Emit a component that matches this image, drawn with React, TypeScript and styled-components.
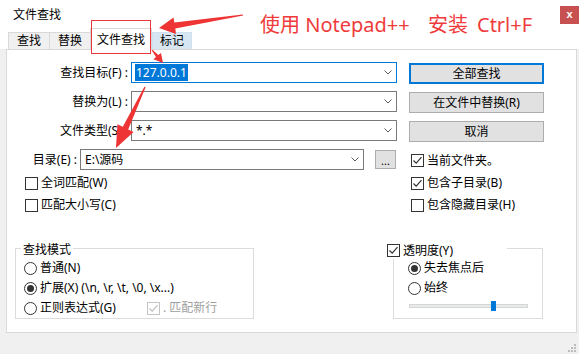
import React from "react";
import styled, { createGlobalStyle } from "styled-components";

const GlobalStyle = createGlobalStyle`
  html, body { margin: 0; padding: 0; background: #ffffff; }
  body {
    font-family: "Noto Sans", "Noto Sans CJK SC", sans-serif;
    font-size: 12px;
    line-height: 16px;
    color: #000;
  }
  *, *::before, *::after { box-sizing: border-box; }
`;

const Window = styled.div`
  position: relative;
  width: 579px;
  height: 354px;
  background: #f0f0f0;
  display: flex;
  flex-direction: column;
`;

const TitleBar = styled.div`
  height: 28px;
  flex: none;
  background: #fff;
  display: flex;
  align-items: center;
  justify-content: space-between;
  padding: 2px 0 0 13px;
`;

const Title = styled.span`
  color: #000;
`;

const CloseButton = styled.div`
  width: 19px;
  height: 18px;
  background: #c75050;
  color: #fff;
  display: flex;
  align-items: center;
  justify-content: center;
  font-family: "Liberation Sans", sans-serif;
  font-weight: bold;
  font-size: 11px;
  line-height: 1;
  padding-bottom: 2px;
`;

const TabStrip = styled.div`
  height: 21px;
  flex: none;
  background: #fff;
  display: flex;
  align-items: flex-end;
  padding-left: 8px;
  position: relative;
  z-index: 1;
`;

type TabVariant = "normal" | "active" | "hot";

const Tab = styled.div<{ $variant: TabVariant; $w: number; $ml: number }>`
  width: ${(p) => p.$w}px;
  margin-left: ${(p) => p.$ml}px;
  height: ${(p) => (p.$variant === "active" ? 22 : 17)}px;
  margin-bottom: ${(p) => (p.$variant === "active" ? -1 : 0)}px;
  display: flex;
  align-items: center;
  justify-content: center;
  white-space: nowrap;
  border: 1px solid
    ${(p) => (p.$variant === "hot" ? "#cfe0f1" : "#d9d9d9")};
  border-bottom: none;
  background: ${(p) =>
    p.$variant === "active" ? "#ffffff" : p.$variant === "hot" ? "#d8e6f2" : "#f0f0f0"};
`;

const Client = styled.div`
  flex: none;
  height: 284px;
  display: flex;
  padding: 0 2px 0 6px;
`;

const Panel = styled.div`
  flex: 1;
  background: #fff;
  border: 1px solid #d9d9d9;
  padding-top: 12px;
  display: flex;
  flex-direction: column;
  gap: 32px;
`;

const TopGrid = styled.div`
  display: grid;
  grid-template-columns: 390px 135px;
  column-gap: 12px;
  grid-template-rows: 29px 29px 29px 23px 22px 22px;
`;

const FieldRow = styled.div<{ $indent?: number }>`
  display: flex;
  align-items: center;
  align-self: start;
  padding-left: ${(p) => p.$indent ?? 0}px;
`;

const FieldLabel = styled.span<{ $w: number }>`
  width: ${(p) => p.$w}px;
  text-align: right;
  white-space: nowrap;
  margin-right: 3px;
`;

const Combo = styled.div<{ $w: number; $focus?: boolean }>`
  width: ${(p) => p.$w}px;
  height: 21px;
  border: 1px solid ${(p) => (p.$focus ? "#0078d7" : "#7a7a7a")};
  background: #fff;
  display: flex;
  align-items: center;
  justify-content: space-between;
  padding: 0 4px 0 3px;
`;

const ComboText = styled.span`
  padding-left: 1px;
  white-space: nowrap;
`;

const Selected = styled.span`
  background: #0078d7;
  color: #fff;
  padding: 0 1px;
  margin-left: -1px;
`;

const Button = styled.div<{ $default?: boolean }>`
  height: 21px;
  margin-top: 1px;
  align-self: start;
  border: ${(p) => (p.$default ? "2px solid #0078d7" : "1px solid #adadad")};
  background: #e1e1e1;
  display: flex;
  align-items: center;
  justify-content: center;
  white-space: nowrap;
`;

const SmallButton = styled.div`
  width: 21px;
  height: 19px;
  margin-left: 11px;
  border: 1px solid #adadad;
  background: #e1e1e1;
  display: flex;
  align-items: flex-end;
  justify-content: center;
  font-size: 11px;
  line-height: 14px;
`;

const CheckRow = styled.div<{ $indent?: number; $disabled?: boolean }>`
  display: flex;
  align-items: center;
  align-self: center;
  gap: 3px;
  padding-left: ${(p) => p.$indent ?? 0}px;
  color: ${(p) => (p.$disabled ? "#a0a0a0" : "#000")};
  white-space: nowrap;
`;

const Box = styled.span<{ $disabled?: boolean }>`
  width: 13px;
  height: 13px;
  flex: none;
  border: 1px solid ${(p) => (p.$disabled ? "#c4c4c4" : "#333")};
  background: #fff;
  display: flex;
  align-items: center;
  justify-content: center;
`;

const Circle = styled.span`
  width: 13px;
  height: 13px;
  flex: none;
  border: 1px solid #333;
  border-radius: 50%;
  background: #fff;
  display: flex;
  align-items: center;
  justify-content: center;
`;

const Dot = styled.span`
  width: 7px;
  height: 7px;
  border-radius: 50%;
  background: #333;
`;

const RadioRow = styled.div<{ $w?: number }>`
  display: flex;
  align-items: center;
  gap: 3px;
  height: 20px;
  white-space: nowrap;
  width: ${(p) => (p.$w ? `${p.$w}px` : "auto")};
  flex: none;
`;

const Line = styled.div`
  display: flex;
  align-items: center;
  height: 20px;
`;

const Lower = styled.div`
  display: flex;
  padding-left: 8px;
  gap: 139px;
`;

const GroupBox = styled.div<{ $w: number; $pl: number }>`
  position: relative;
  width: ${(p) => p.$w}px;
  height: 71px;
  border: 1px solid #dcdcdc;
  padding: 9px 0 0 ${(p) => p.$pl}px;
  display: flex;
  flex-direction: column;
`;

const Legend = styled.span`
  position: absolute;
  top: -7px;
  left: 5px;
  padding: 0 2px;
  background: #fff;
  line-height: 16px;
`;

const CheckLegend = styled.div`
  position: absolute;
  top: -7px;
  left: -7px;
  width: 120px;
  height: 17px;
  background: #fff;
  display: flex;
  align-items: center;
  gap: 3px;
`;

const SliderRow = styled.div`
  height: 15px;
  display: flex;
  align-items: center;
`;

const Track = styled.div`
  position: relative;
  width: 119px;
  height: 4px;
  margin-left: 1px;
  background: #e7eaea;
  border: 1px solid #d6d6d6;
`;

const Thumb = styled.div`
  position: absolute;
  top: -4px;
  width: 5px;
  height: 10px;
  background: #0078d7;
`;

const StatusBar = styled.div`
  flex: 1;
  display: flex;
  justify-content: flex-end;
  align-items: flex-end;
  padding: 0 3px 2px 0;
`;

const Overlay = styled.div`
  position: absolute;
  inset: 0;
  pointer-events: none;
  z-index: 5;
`;

const AnnoSpan = styled.span<{ $x: number }>`
  position: absolute;
  left: ${(p) => p.$x}px;
  top: 13px;
  font-family: "Noto Sans", "Noto Sans CJK SC", sans-serif;
  font-size: 20px;
  line-height: 24px;
  color: #ef3b3b;
  white-space: pre;
`;

const RedBox = styled.div`
  position: absolute;
  left: 91px;
  top: 20px;
  width: 60px;
  height: 34px;
  border: 1px solid #e8383d;
`;

const ArrowLayer = styled.svg`
  position: absolute;
  left: 0;
  top: 0;
`;

const Chevron = () => (
  <svg width="8" height="5" viewBox="0 0 8 5">
    <polyline points="0.5,0.5 4,4 7.5,0.5" fill="none" stroke="#5a5a5a" strokeWidth="1" />
  </svg>
);

const Tick = ({ color }: { color: string }) => (
  <svg width="11" height="11" viewBox="0 0 11 11">
    <polyline points="1.5,5.5 4.2,8.2 9.5,2.2" fill="none" stroke={color} strokeWidth="1.2" />
  </svg>
);

function Check({
  checked,
  disabled,
  indent,
  children,
}: {
  checked?: boolean;
  disabled?: boolean;
  indent?: number;
  children: React.ReactNode;
}) {
  return (
    <CheckRow $indent={indent} $disabled={disabled}>
      <Box $disabled={disabled}>{checked && <Tick color={disabled ? "#bdbdbd" : "#333"} />}</Box>
      <span>{children}</span>
    </CheckRow>
  );
}

function Radio({ selected, w, children }: { selected?: boolean; w?: number; children: React.ReactNode }) {
  return (
    <RadioRow $w={w}>
      <Circle>{selected && <Dot />}</Circle>
      <span>{children}</span>
    </RadioRow>
  );
}

const Grip = () => (
  <svg width="8" height="8" viewBox="0 0 8 8">
    {[
      [6, 0],
      [3, 3],
      [6, 3],
      [0, 6],
      [3, 6],
      [6, 6],
    ].map(([x, y]) => (
      <rect key={`${x}-${y}`} x={x} y={y} width="2" height="2" fill="#bcbcbc" />
    ))}
  </svg>
);

const opacityValue = 72;

export default function App() {
  const thumbLeft = Math.round((opacityValue / 100) * (117 - 5));
  return (
    <>
      <GlobalStyle />
      <Window>
        <TitleBar>
          <Title>文件查找</Title>
          <CloseButton>x</CloseButton>
        </TitleBar>
        <TabStrip>
          <Tab $variant="normal" $w={42} $ml={0}>查找</Tab>
          <Tab $variant="normal" $w={42} $ml={-1}>替换</Tab>
          <Tab $variant="active" $w={62} $ml={-1}>文件查找</Tab>
          <Tab $variant="hot" $w={40} $ml={0}>标记</Tab>
        </TabStrip>
        <Client>
          <Panel>
            <TopGrid>
              <FieldRow>
                <FieldLabel $w={121}>查找目标(F) :</FieldLabel>
                <Combo $w={266} $focus>
                  <ComboText>
                    <Selected>127.0.0.1</Selected>
                  </ComboText>
                  <Chevron />
                </Combo>
              </FieldRow>
              <Button $default>全部查找</Button>

              <FieldRow>
                <FieldLabel $w={121}>替换为(L) :</FieldLabel>
                <Combo $w={266}>
                  <ComboText />
                  <Chevron />
                </Combo>
              </FieldRow>
              <Button>在文件中替换(R)</Button>

              <FieldRow>
                <FieldLabel $w={121}>文件类型(S) :</FieldLabel>
                <Combo $w={266}>
                  <ComboText>*.*</ComboText>
                  <Chevron />
                </Combo>
              </FieldRow>
              <Button>取消</Button>

              <FieldRow $indent={25}>
                <FieldLabel $w={45}>目录(E) :</FieldLabel>
                <Combo $w={284}>
                  <ComboText>{"E:\\源码"}</ComboText>
                  <Chevron />
                </Combo>
                <SmallButton>...</SmallButton>
              </FieldRow>
              <Check checked indent={2}>当前文件夹。</Check>

              <Check indent={18}>全词匹配(W)</Check>
              <Check checked indent={2}>包含子目录(B)</Check>

              <Check indent={18}>匹配大小写(C)</Check>
              <Check indent={2}>包含隐藏目录(H)</Check>
            </TopGrid>

            <Lower>
              <GroupBox $w={239} $pl={8}>
                <Legend>查找模式</Legend>
                <Radio>普通(N)</Radio>
                <Radio selected>{"扩展(X) (\\n, \\r, \\t, \\0, \\x...)"}</Radio>
                <Line>
                  <Radio w={123}>正则表达式(G)</Radio>
                  <Check checked disabled>
                    . 匹配新行
                  </Check>
                </Line>
              </GroupBox>

              <GroupBox $w={150} $pl={14}>
                <CheckLegend>
                  <Box>
                    <Tick color="#333" />
                  </Box>
                  <span>透明度(Y)</span>
                </CheckLegend>
                <Radio selected>失去焦点后</Radio>
                <Radio>始终</Radio>
                <SliderRow>
                  <Track>
                    <Thumb style={{ left: thumbLeft }} />
                  </Track>
                </SliderRow>
              </GroupBox>
            </Lower>
          </Panel>
        </Client>
        <StatusBar>
          <Grip />
        </StatusBar>

        <Overlay>
          <AnnoSpan $x={260}>使用 Notepad++</AnnoSpan>
          <AnnoSpan $x={428}>安装</AnnoSpan>
          <AnnoSpan $x={477}>Ctrl+F</AnnoSpan>
          <RedBox />
          <ArrowLayer width="579" height="354" viewBox="0 0 579 354">
            <polygon
              fill="#ee3434"
              points="159,28 176,34 175.3,28.6 243.2,15.6 242.8,14.4 174.3,22.6 173.5,17.5"
            />
            <polygon
              fill="#ee3434"
              points="163,63 161,52.9 158.3,55.1 152.4,49.7 151.6,50.3 156,57.1 153.4,59.3"
            />
            <polygon
              fill="#ee3434"
              points="116,148 133.6,132 128.2,129.4 145.6,87.3 144.4,86.7 122.8,126.8 117.4,124.2"
            />
          </ArrowLayer>
        </Overlay>
      </Window>
    </>
  );
}
